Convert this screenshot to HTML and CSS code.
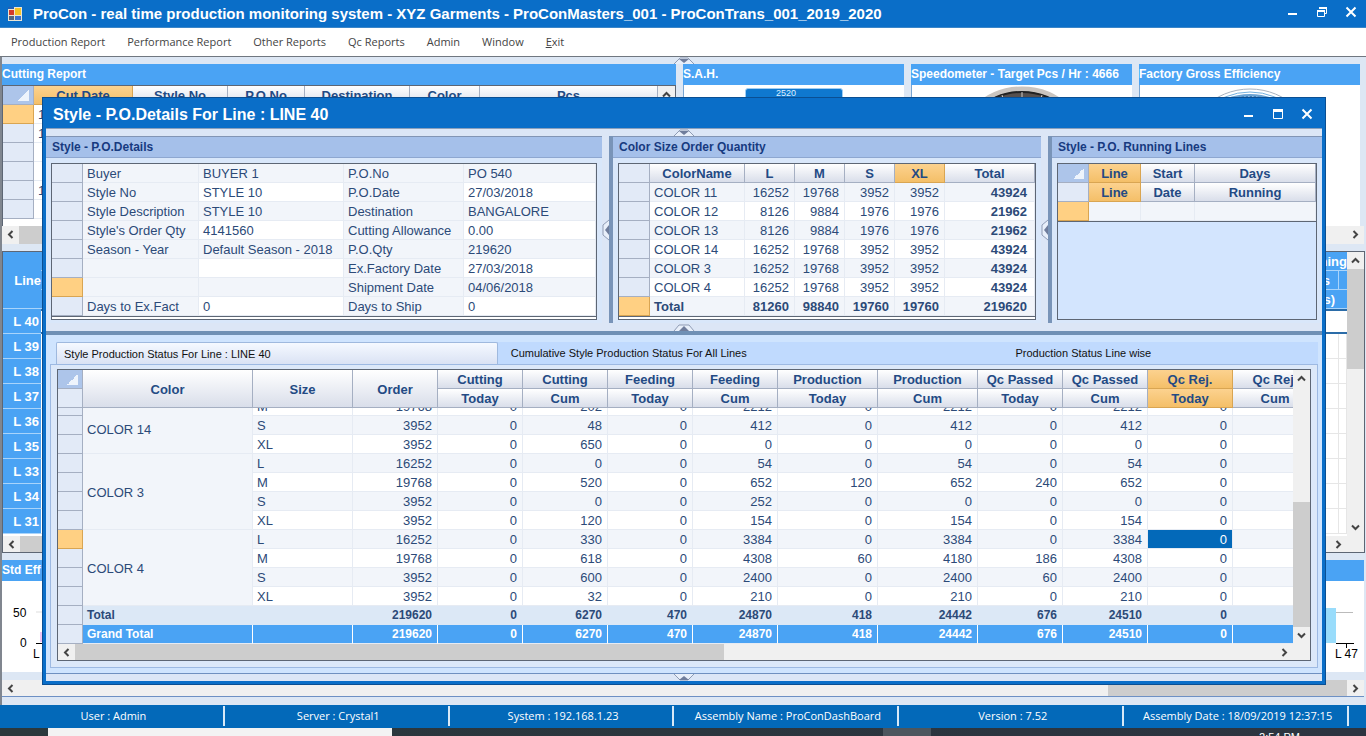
FILE: index.html
```html
<!DOCTYPE html>
<html lang="en">
<head>
  <meta charset="UTF-8">
  <meta name="viewport" content="width=device-width, initial-scale=1.0">
  <title>ProCon - real time production monitoring system</title>
  <link rel="stylesheet" href="styles.css">
</head>
<body>

  <!-- Shared icons -->
  <svg class="icon-defs" aria-hidden="true">
    <symbol id="arrow-up" viewBox="0 0 9 9"><path d="M1 6.5L4.500 3L8 6.500" fill="none" stroke="#444" stroke-width="2"/></symbol>
    <symbol id="arrow-down" viewBox="0 0 9 9"><path d="M1 2.500L4.500 6L8 2.500" fill="none" stroke="#444" stroke-width="2"/></symbol>
    <symbol id="arrow-left" viewBox="0 0 9 9"><path d="M6.500 1L3 4.500L6.500 8" fill="none" stroke="#444" stroke-width="2"/></symbol>
    <symbol id="arrow-right" viewBox="0 0 9 9"><path d="M2.500 1L6 4.500L2.500 8" fill="none" stroke="#444" stroke-width="2"/></symbol>
    <symbol id="win-min" viewBox="0 0 14 14"><path d="M2 9h9" stroke="#fff" stroke-width="2"/></symbol>
    <symbol id="win-max" viewBox="0 0 14 14"><path d="M2.500 2.500h9v9h-9z" fill="none" stroke="#fff"/><path d="M2 3.500h10" stroke="#fff" stroke-width="3"/></symbol>
    <symbol id="win-restore" viewBox="0 0 14 14"><path d="M4.500 4V2.500h7v6H9.500M2.500 5.500h7v6h-7z" fill="none" stroke="#fff"/><path d="M4 3h8M2 6h8" stroke="#fff" stroke-width="2"/></symbol>
    <symbol id="win-close" viewBox="0 0 14 14"><path d="M2.500 2.500l9 9M11.500 2.500l-9 9" stroke="#fff" stroke-width="2"/></symbol>
    <symbol id="grip-down" viewBox="0 0 22 7"><path d="M1 7L7 1H15L21 7" fill="#e8effa" stroke="#8e9bb4"/><path d="M6 2h10l-5 4z" fill="#6f7d9c"/></symbol>
    <symbol id="grip-up" viewBox="0 0 22 7"><path d="M1 7L6 1H16L21 7" fill="#e8effa" stroke="#8e9bb4"/><path d="M6 7h10l-5-5z" fill="#6f7d9c"/></symbol>
    <symbol id="grip-foot" viewBox="0 0 22 7"><path d="M1 0L7 6H15L21 0" fill="#e8effa" stroke="#8e9bb4"/><path d="M6 6h10l-5-4z" fill="#6f7d9c"/></symbol>
    <symbol id="grip-left" viewBox="0 0 7 22"><path d="M7 1L1 6V16L7 21" fill="#e8effa" stroke="#8e9bb4"/><path d="M7 6v10l-4-5z" fill="#6f7d9c"/></symbol>
  </svg>

  <header class="titlebar">
    <svg class="app-icon" viewBox="0 0 14 14">
      <rect width="14" height="14" fill="#e9e4d4"/>
      <rect x="1" y="3" width="5" height="5" fill="#d33b2c"/>
      <rect x="7" y="1" width="6" height="7" fill="#f5c326"/>
      <rect x="1" y="9" width="5" height="4" fill="#56657e"/>
      <rect x="7" y="9" width="6" height="4" fill="#3c74cf"/>
      <path d="M0 1h6" stroke="#2360b5" stroke-width="2"/>
    </svg>
    <h1 class="titlebar-text">ProCon - real time production monitoring system - XYZ Garments - ProConMasters_001 - ProConTrans_001_2019_2020</h1>
    <div class="win-buttons">
      <button aria-label="Minimize"><svg><use href="#win-min"/></svg></button>
      <button aria-label="Restore"><svg><use href="#win-restore"/></svg></button>
      <button aria-label="Close"><svg><use href="#win-close"/></svg></button>
    </div>
  </header>

  <nav class="menu">
    <a href="#">Production Report</a>
    <a href="#">Performance Report</a>
    <a href="#">Other Reports</a>
    <a href="#">Qc Reports</a>
    <a href="#">Admin</a>
    <a href="#">Window</a>
    <a href="#"><u>E</u>xit</a>
  </nav>

  <main class="dashboard">
    <div class="strip"><svg class="grip"><use href="#grip-down"/></svg></div>

    <!-- Top row of panels -->
    <div class="panels">
      <section class="panel">
        <h2 class="panel-title">Cutting Report</h2>
        <div class="grid-wrap cutting">
          <table class="grid">
            <colgroup><col class="w31"><col class="w99"><col class="w95"><col class="w77"><col class="w105"><col class="w70"><col></colgroup>
            <thead>
              <tr><th class="corner"></th><th class="active">Cut.Date</th><th>Style No</th><th>P.O.No</th><th>Destination</th><th>Color</th><th>Pcs</th></tr>
            </thead>
            <tbody>
              <tr><th class="active"></th><td>1</td><td></td><td></td><td></td><td></td><td></td></tr>
              <tr><th></th><td>1</td><td></td><td></td><td></td><td></td><td></td></tr>
              <tr><th></th><td></td><td></td><td></td><td></td><td></td><td></td></tr>
              <tr><th></th><td></td><td></td><td></td><td></td><td></td><td></td></tr>
              <tr><th></th><td>1</td><td></td><td></td><td></td><td></td><td></td></tr>
              <tr><th></th><td></td><td></td><td></td><td></td><td></td><td></td></tr>
            </tbody>
          </table>
          <div class="vscroll">
            <button aria-label="Scroll up"><svg><use href="#arrow-up"/></svg></button>
          </div>
        </div>
      </section>
      <section class="panel">
        <h2 class="panel-title">S.A.H.</h2>
        <div class="panel-body"><span class="sah-value">2520</span></div>
      </section>
      <section class="panel">
        <h2 class="panel-title">Speedometer - Target Pcs / Hr : 4666</h2>
        <div class="panel-body">
          <svg class="gauge" viewBox="0 0 140 140">
            <circle cx="70" cy="70" r="67" fill="#4b4644" stroke="#c9c4bf" stroke-width="5"/>
            <circle cx="70" cy="70" r="64" fill="#57504d" stroke="#222" stroke-width="2"/>
            <path d="M70 6v12M50 9l3 9M90 9l-3 9" stroke="#cfcac6"/>
          </svg>
        </div>
      </section>
      <section class="panel">
        <h2 class="panel-title">Factory Gross Efficiency</h2>
        <div class="panel-body">
          <svg class="gauge" viewBox="0 0 140 140">
            <circle cx="70" cy="70" r="67" fill="#fff" stroke="#a9b3bf"/>
            <circle cx="70" cy="70" r="64" fill="#fff" stroke="#74b1df"/>
            <circle cx="70" cy="70" r="61" fill="#3b7db9" stroke="#6ba3d3" stroke-width="2"/>
            <circle cx="70" cy="70" r="59" fill="none" stroke="#cfe2f3" stroke-width="2" stroke-dasharray="1 3"/>
          </svg>
        </div>
      </section>
    </div>
    <div class="hscroll top-scroll">
      <button aria-label="Scroll left"><svg><use href="#arrow-left"/></svg></button>
      <div class="track"><div class="thumb thumb-half"></div></div>
      <button aria-label="Scroll right"><svg><use href="#arrow-right"/></svg></button>
    </div>

    <!-- Line wise grid -->
    <section class="lines">
      <div class="lines-main">
        <div class="lines-clip">
          <table class="line-grid">
            <colgroup><col class="w38"><col><col class="w70"><col class="w8"></colgroup>
            <thead>
              <tr><th rowspan="3">Line</th><th></th><th colspan="2">Running</th></tr>
              <tr><th></th><th class="mid">Mins</th><th></th></tr>
              <tr><th></th><th class="mid" colspan="2">(Mins)</th></tr>
            </thead>
            <tbody>
              <tr class="current"><th>L 40</th><td></td><td></td><td></td></tr>
              <tr><th>L 39</th><td></td><td></td><td></td></tr>
              <tr><th>L 38</th><td></td><td></td><td></td></tr>
              <tr><th>L 37</th><td></td><td></td><td></td></tr>
              <tr><th>L 36</th><td></td><td></td><td></td></tr>
              <tr><th>L 35</th><td></td><td></td><td></td></tr>
              <tr><th>L 33</th><td></td><td></td><td></td></tr>
              <tr><th>L 34</th><td></td><td></td><td></td></tr>
              <tr><th>L 31</th><td></td><td></td><td></td></tr>
            </tbody>
          </table>
        </div>
        <div class="vscroll">
          <button aria-label="Scroll up"><svg><use href="#arrow-up"/></svg></button>
          <div class="track"><div class="thumb thumb-lines"></div></div>
          <button aria-label="Scroll down"><svg><use href="#arrow-down"/></svg></button>
        </div>
      </div>
      <div class="hscroll with-corner">
        <button aria-label="Scroll left"><svg><use href="#arrow-left"/></svg></button>
        <div class="track"><div class="thumb thumb-half"></div></div>
        <button aria-label="Scroll right"><svg><use href="#arrow-right"/></svg></button>
      </div>
    </section>

    <!-- Efficiency chart -->
    <section class="chart">
      <h2 class="panel-title">Std Eff</h2>
      <div class="chart-body">
        <svg class="chart-end" viewBox="0 0 42 90">
          <path d="M34 31h8" stroke="#ddd"/>
          <rect x="38" y="51" width="4" height="10" fill="#f0c4f3"/>
          <path d="M34 62.500h8" stroke="#000"/>
          <text x="11" y="36">50</text>
          <text x="18" y="66">0</text>
          <text x="31" y="77">L</text>
        </svg>
        <svg class="chart-end" viewBox="0 0 42 90">
          <path d="M0 31.500h31" stroke="#bbb"/>
          <rect x="0" y="27" width="14" height="35" fill="#99dcfb"/>
          <path d="M14 62.500h18M24.500 62v5" stroke="#000"/>
          <text x="13" y="77">L 47</text>
        </svg>
      </div>
    </section>

    <div class="hscroll page-scroll">
      <button aria-label="Scroll left"><svg><use href="#arrow-left"/></svg></button>
      <div class="track track-end"><div class="thumb thumb-page"></div></div>
      <button aria-label="Scroll right"><svg><use href="#arrow-right"/></svg></button>
    </div>

    <!-- Details window -->
    <div class="dialog" role="dialog" aria-labelledby="dialog-title">
      <div class="dialog-title">
        <h2 id="dialog-title">Style - P.O.Details For Line : LINE 40</h2>
        <div class="win-buttons">
          <button aria-label="Minimize"><svg><use href="#win-min"/></svg></button>
          <button aria-label="Maximize"><svg><use href="#win-max"/></svg></button>
          <button aria-label="Close"><svg><use href="#win-close"/></svg></button>
        </div>
      </div>
      <div class="dialog-body">
        <div class="strip dialog-strip"><svg class="grip"><use href="#grip-down"/></svg></div>

        <div class="panes">
          <section class="pane">
            <h3 class="pane-title">Style - P.O.Details</h3>
            <div class="grid-box">
              <table class="grid details">
                <colgroup><col class="w31"><col class="w116"><col class="w145"><col class="w120"><col></colgroup>
                <tbody>
                  <tr><th></th><td>Buyer</td><td>BUYER 1</td><td>P.O.No</td><td>PO 540</td></tr>
                  <tr><th></th><td>Style No</td><td>STYLE 10</td><td>P.O.Date</td><td>27/03/2018</td></tr>
                  <tr><th></th><td>Style Description</td><td>STYLE 10</td><td>Destination</td><td>BANGALORE</td></tr>
                  <tr><th></th><td>Style's Order Qty</td><td>4141560</td><td>Cutting Allowance</td><td>0.00</td></tr>
                  <tr><th></th><td>Season - Year</td><td>Default Season - 2018</td><td>P.O.Qty</td><td>219620</td></tr>
                  <tr><th></th><td></td><td></td><td>Ex.Factory Date</td><td>27/03/2018</td></tr>
                  <tr><th class="active"></th><td></td><td></td><td>Shipment Date</td><td>04/06/2018</td></tr>
                  <tr><th></th><td>Days to Ex.Fact</td><td>0</td><td>Days to Ship</td><td>0</td></tr>
                </tbody>
              </table>
            </div>
          </section>
          <div class="splitter"><svg class="grip-v"><use href="#grip-left"/></svg></div>
          <section class="pane">
            <h3 class="pane-title">Color Size Order Quantity</h3>
            <div class="grid-box">
              <table class="grid sizes">
                <colgroup><col class="w31"><col class="w95"><col class="w50"><col class="w50"><col class="w50"><col class="w50"><col></colgroup>
                <thead>
                  <tr><th class="row-head"></th><th>ColorName</th><th>L</th><th>M</th><th>S</th><th class="active">XL</th><th>Total</th></tr>
                </thead>
                <tbody>
                  <tr><th></th><td>COLOR 11</td><td>16252</td><td>19768</td><td>3952</td><td>3952</td><td>43924</td></tr>
                  <tr><th></th><td>COLOR 12</td><td>8126</td><td>9884</td><td>1976</td><td>1976</td><td>21962</td></tr>
                  <tr><th></th><td>COLOR 13</td><td>8126</td><td>9884</td><td>1976</td><td>1976</td><td>21962</td></tr>
                  <tr><th></th><td>COLOR 14</td><td>16252</td><td>19768</td><td>3952</td><td>3952</td><td>43924</td></tr>
                  <tr><th></th><td>COLOR 3</td><td>16252</td><td>19768</td><td>3952</td><td>3952</td><td>43924</td></tr>
                  <tr><th></th><td>COLOR 4</td><td>16252</td><td>19768</td><td>3952</td><td>3952</td><td>43924</td></tr>
                  <tr class="sum"><th class="active"></th><td>Total</td><td>81260</td><td>98840</td><td>19760</td><td>19760</td><td>219620</td></tr>
                </tbody>
              </table>
            </div>
          </section>
          <div class="splitter"><svg class="grip-v"><use href="#grip-left"/></svg></div>
          <section class="pane">
            <h3 class="pane-title">Style - P.O. Running Lines</h3>
            <div class="grid-box grid-box-empty">
              <table class="grid">
                <colgroup><col class="w31"><col class="w52"><col class="w54"><col></colgroup>
                <thead>
                  <tr><th class="corner"></th><th class="active">Line</th><th>Start</th><th>Days</th></tr>
                  <tr><th class="row-head"></th><th class="active">Line</th><th>Date</th><th>Running</th></tr>
                </thead>
                <tbody>
                  <tr><th class="active"></th><td></td><td></td><td></td></tr>
                </tbody>
              </table>
            </div>
          </section>
        </div>

        <div class="strip split-strip"><svg class="grip"><use href="#grip-up"/></svg></div>

        <section class="status">
          <div class="tabs" role="tablist">
            <button class="tab selected" role="tab" aria-selected="true">Style Production Status For Line : LINE 40</button>
            <button class="tab" role="tab" aria-selected="false">Cumulative Style Production Status For All Lines</button>
            <button class="tab" role="tab" aria-selected="false">Production Status Line wise</button>
          </div>
          <div class="tab-panel" role="tabpanel">
            <div class="status-grid">
              <div class="status-main">
                <div class="status-clip">
                  <table class="grid status-head">
                    <colgroup><col class="w25"><col class="w170"><col class="w100"><col class="w85"><col class="w85"><col class="w85"><col class="w85"><col class="w85"><col class="w100"><col class="w100"><col class="w85"><col class="w85"><col class="w85"><col class="w85"></colgroup>
                    <thead>
                      <tr><th class="corner"></th><th rowspan="2">Color</th><th rowspan="2">Size</th><th rowspan="2">Order</th><th>Cutting</th><th>Cutting</th><th>Feeding</th><th>Feeding</th><th>Production</th><th>Production</th><th>Qc Passed</th><th>Qc Passed</th><th class="active">Qc Rej.</th><th>Qc Rej.</th></tr>
                      <tr><th class="row-head"></th><th>Today</th><th>Cum</th><th>Today</th><th>Cum</th><th>Today</th><th>Cum</th><th>Today</th><th>Cum</th><th class="active">Today</th><th>Cum</th></tr>
                    </thead>
                  </table>
                  <!-- Kept scrolled to the last row -->
                  <div class="status-rows">
                    <table class="grid status-body">
                      <colgroup><col class="w25"><col class="w170"><col class="w100"><col class="w85"><col class="w85"><col class="w85"><col class="w85"><col class="w85"><col class="w100"><col class="w100"><col class="w85"><col class="w85"><col class="w85"><col class="w85"></colgroup>
                      <tbody>
                        <tr><th></th><td class="group cut" rowspan="3">COLOR 14</td><td class="size">M</td><td>19768</td><td>0</td><td>202</td><td>0</td><td>2212</td><td>0</td><td>2212</td><td>0</td><td>2212</td><td>0</td><td></td></tr>
                        <tr class="alt"><th></th><td class="size">S</td><td>3952</td><td>0</td><td>48</td><td>0</td><td>412</td><td>0</td><td>412</td><td>0</td><td>412</td><td>0</td><td></td></tr>
                        <tr><th></th><td class="size">XL</td><td>3952</td><td>0</td><td>650</td><td>0</td><td>0</td><td>0</td><td>0</td><td>0</td><td>0</td><td>0</td><td></td></tr>
                        <tr class="alt"><th></th><td class="group" rowspan="4">COLOR 3</td><td class="size">L</td><td>16252</td><td>0</td><td>0</td><td>0</td><td>54</td><td>0</td><td>54</td><td>0</td><td>54</td><td>0</td><td></td></tr>
                        <tr><th></th><td class="size">M</td><td>19768</td><td>0</td><td>520</td><td>0</td><td>652</td><td>120</td><td>652</td><td>240</td><td>652</td><td>0</td><td></td></tr>
                        <tr class="alt"><th></th><td class="size">S</td><td>3952</td><td>0</td><td>0</td><td>0</td><td>252</td><td>0</td><td>0</td><td>0</td><td>0</td><td>0</td><td></td></tr>
                        <tr><th></th><td class="size">XL</td><td>3952</td><td>0</td><td>120</td><td>0</td><td>154</td><td>0</td><td>154</td><td>0</td><td>154</td><td>0</td><td></td></tr>
                        <tr class="alt"><th class="active"></th><td class="group" rowspan="4">COLOR 4</td><td class="size">L</td><td>16252</td><td>0</td><td>330</td><td>0</td><td>3384</td><td>0</td><td>3384</td><td>0</td><td>3384</td><td class="picked">0</td><td></td></tr>
                        <tr><th></th><td class="size">M</td><td>19768</td><td>0</td><td>618</td><td>0</td><td>4308</td><td>60</td><td>4180</td><td>186</td><td>4308</td><td>0</td><td></td></tr>
                        <tr class="alt"><th></th><td class="size">S</td><td>3952</td><td>0</td><td>600</td><td>0</td><td>2400</td><td>0</td><td>2400</td><td>60</td><td>2400</td><td>0</td><td></td></tr>
                        <tr><th></th><td class="size">XL</td><td>3952</td><td>0</td><td>32</td><td>0</td><td>210</td><td>0</td><td>210</td><td>0</td><td>210</td><td>0</td><td></td></tr>
                      </tbody>
                      <tfoot>
                        <tr class="total"><th></th><td class="size">Total</td><td></td><td>219620</td><td>0</td><td>6270</td><td>470</td><td>24870</td><td>418</td><td>24442</td><td>676</td><td>24510</td><td>0</td><td></td></tr>
                        <tr class="grand"><th></th><td class="size">Grand Total</td><td></td><td>219620</td><td>0</td><td>6270</td><td>470</td><td>24870</td><td>418</td><td>24442</td><td>676</td><td>24510</td><td>0</td><td></td></tr>
                      </tfoot>
                    </table>
                  </div>
                </div>
                <div class="vscroll">
                  <button aria-label="Scroll up"><svg><use href="#arrow-up"/></svg></button>
                  <div class="track track-end"><div class="thumb thumb-status"></div></div>
                  <button aria-label="Scroll down"><svg><use href="#arrow-down"/></svg></button>
                </div>
              </div>
              <div class="hscroll with-corner">
                <button aria-label="Scroll left"><svg><use href="#arrow-left"/></svg></button>
                <div class="track"><div class="thumb thumb-wide"></div></div>
                <button aria-label="Scroll right"><svg><use href="#arrow-right"/></svg></button>
              </div>
            </div>
          </div>
        </section>

        <div class="strip foot-strip"><svg class="grip"><use href="#grip-foot"/></svg></div>
      </div>
    </div>
  </main>

  <footer class="statusbar">
    <span>User : Admin</span>
    <span>Server : Crystal1</span>
    <span>System : 192.168.1.23</span>
    <span>Assembly Name : ProConDashBoard</span>
    <span>Version : 7.52</span>
    <span>Assembly Date : 18/09/2019 12:37:15</span>
  </footer>
  <div class="taskbar">
    <div class="task-search"></div>
    <div class="task-app"></div>
    <div class="task-tray">2:54 PM</div>
  </div>
</body>
</html>
```
FILE: styles.css
```css
:root {
  --title-blue: #0a6ec8;
  --bar-blue: #4aa3f4;
  --deep-blue: #0369b9;
  --text: #2c4a78;
  --head-text: #234a84;
  --grid-line: #e6ebf3;
  --head-line: #a5afc2;
  --row-head: #e2eaf7;
  --alt: #f2f5fa;
  --orange: #ffd083;
}

* {
  margin: 0;
  padding: 0;
  box-sizing: border-box;
}

body {
  height: 100vh;
  display: flex;
  flex-direction: column;
  overflow: hidden;
  background: #fff;
  color: var(--text);
  font-family: "Liberation Sans", Arial, sans-serif;
  font-size: 13px;
}

button {
  border: 0;
  background: none;
  font: inherit;
}

.icon-defs {
  display: none;
}

/* Main window title */
.titlebar {
  flex: none;
  height: 28px;
  display: flex;
  align-items: center;
  gap: 11px;
  padding: 0 8px;
  background: var(--title-blue);
  border-bottom: 1px solid #3b86c9;
  color: #fff;
}

.app-icon {
  width: 14px;
  height: 14px;
}

.titlebar-text {
  flex: 1;
  font-size: 15px;
  white-space: nowrap;
}

.win-buttons {
  display: flex;
  gap: 15px;
}

.win-buttons button,
.win-buttons svg {
  display: block;
  width: 14px;
  height: 14px;
}

.titlebar .win-buttons {
  padding-bottom: 4px;
}

/* Menu */
.menu {
  flex: none;
  height: 29px;
  display: flex;
  align-items: center;
  gap: 22px;
  padding: 0 11px 2px;
  border-bottom: 1px solid #707780;
  background: #fff;
  font-family: "Open Sans", "Noto Sans", sans-serif;
  font-size: 11px;
}

.menu a {
  color: #444;
  text-decoration: none;
}

/* Dashboard behind the details window */
.dashboard {
  flex: 1;
  min-height: 0;
  position: relative;
  display: flex;
  flex-direction: column;
  padding-bottom: 9px;
  border-left: 2px solid #80868f;
  background: #dde7f4;
}

.strip {
  flex: none;
  height: 7px;
  display: flex;
  justify-content: center;
}

.grip {
  width: 22px;
  height: 7px;
}

.grip-v {
  width: 7px;
  height: 22px;
}

.panels {
  flex: none;
  height: 162px;
  display: grid;
  grid-template-columns: 674fr 221fr 221fr 221fr;
  gap: 7px;
  padding-right: 6px;
}

.panel {
  min-width: 0;
  display: flex;
  flex-direction: column;
  background: #fff;
  overflow: hidden;
}

.panel-title {
  flex: none;
  height: 21px;
  background: var(--bar-blue);
  color: #fff;
  font-size: 12px;
  line-height: 20px;
  white-space: nowrap;
}

.panel-body {
  flex: 1;
  border-left: 1px solid #78a5d2;
  text-align: center;
}

.sah-value {
  display: block;
  width: 98px;
  height: 60px;
  margin: 3px auto 0 61px;
  padding-right: 46px;
  border: 1px solid #9fcdf3;
  border-radius: 3px;
  background: #0f78cf;
  color: #dff0ff;
  font-size: 9px;
  line-height: 9px;
  text-align: right;
}

.gauge {
  width: 140px;
  height: 140px;
  margin-top: 1px;
}

.grid-wrap {
  flex: 1;
  min-height: 0;
  display: flex;
  border: 1px solid #5d6674;
  border-bottom: 0;
}

.grid-wrap .grid {
  align-self: flex-start;
}

/* Grids */
.grid {
  width: 100%;
  table-layout: fixed;
  border-spacing: 0;
  border-collapse: separate;
}

.grid th,
.grid td {
  height: 19px;
  padding: 1px 4px 0;
  border-right: 1px solid var(--grid-line);
  border-bottom: 1px solid var(--grid-line);
  line-height: 17px;
  white-space: nowrap;
  overflow: hidden;
}

.grid th {
  border-color: var(--head-line);
  background: var(--row-head);
}

.grid td {
  background: #fff;
}

.grid thead th {
  background: linear-gradient(#fff, #d9deea);
  color: var(--head-text);
}

.grid thead .row-head {
  background: var(--row-head);
}

.grid thead .corner {
  background: linear-gradient(135deg, transparent 50%, #eef4fc 50%) no-repeat right 4px bottom 3px / 11px 11px, #adc5ea;
}

.grid thead .active {
  background: linear-gradient(#fcd28f, #f4bf68);
  border-color: #d9a552;
}

.grid tbody .active {
  background: var(--orange);
  border-color: #d9a552;
}

.w8 { width: 8px; }
.w25 { width: 25px; }
.w31 { width: 31px; }
.w38 { width: 38px; }
.w50 { width: 50px; }
.w52 { width: 52px; }
.w54 { width: 54px; }
.w70 { width: 70px; }
.w77 { width: 77px; }
.w85 { width: 85px; }
.w95 { width: 95px; }
.w99 { width: 99px; }
.w100 { width: 100px; }
.w105 { width: 105px; }
.w116 { width: 116px; }
.w120 { width: 120px; }
.w145 { width: 145px; }
.w170 { width: 170px; }

/* Scrollbars */
.vscroll,
.hscroll {
  flex: none;
  display: flex;
  background: #f0f0f0;
}

.vscroll {
  width: 17px;
  flex-direction: column;
}

.hscroll {
  height: 16px;
}

.vscroll button,
.hscroll button {
  flex: none;
  width: 17px;
  height: 17px;
  display: flex;
  align-items: center;
  justify-content: center;
}

.vscroll svg,
.hscroll svg {
  width: 9px;
  height: 9px;
}

.with-corner {
  padding-right: 17px;
}

.track {
  flex: 1;
  display: flex;
}

.vscroll .track {
  flex-direction: column;
}

.track-end {
  justify-content: flex-end;
}

.thumb {
  background: #cdcdcd;
}

.thumb-half { width: 50%; }
.thumb-wide { width: 54%; }
.thumb-page { width: 18%; }
.thumb-lines { height: 40%; }
.thumb-status { height: 52%; }

.top-scroll {
  height: 18px;
  margin-right: 2px;
}

/* Line wise grid */
.lines {
  flex: none;
  display: flex;
  flex-direction: column;
  height: 302px;
  margin: 7px 1px 7px 0;
  border: 1px solid #5d6674;
  background: #fff;
}

.lines-main {
  flex: 1;
  min-height: 0;
  display: flex;
}

.lines-clip {
  flex: 1;
  overflow: hidden;
}

.line-grid {
  width: 100%;
  table-layout: fixed;
  border-spacing: 0;
}

.line-grid th {
  height: 25px;
  padding-right: 2px;
  border-bottom: 1px solid #a9d4fb;
  background: var(--bar-blue);
  color: #fff;
  text-align: right;
}

.line-grid td {
  height: 25px;
  border-right: 1px solid #e6e6e6;
  border-bottom: 1px solid #e6e6e6;
}

.line-grid thead th {
  height: 19px;
  padding-right: 0;
}

.line-grid thead th.mid {
  padding-right: 8px;
  border-right: 1px solid #a9d4fb;
}

.line-grid thead th[colspan="2"].mid {
  padding-right: 12px;
  border-right: 0;
}

.line-grid .current td {
  border-right: 0;
  border-top: 2px solid #2b6ca8;
  border-bottom: 2px solid #2b6ca8;
}

/* Efficiency chart */
.chart {
  flex: 1;
  min-height: 0;
  display: flex;
  flex-direction: column;
  margin: 0 2px 8px 0;
  background: #fff;
}

.chart-body {
  flex: 1;
  display: flex;
  justify-content: space-between;
}

.chart-end {
  width: 42px;
  height: 90px;
  font-size: 12px;
}

.page-scroll {
  margin-right: 2px;
  box-shadow: 0 1px #6d90c4;
}

/* Details window, floats over the dashboard */
.dialog {
  position: absolute;
  top: 40px;
  right: 40px;
  bottom: 20px;
  left: 40px;
  display: flex;
  flex-direction: column;
  border: 1px solid #0a4f93;
  background: var(--title-blue);
}

.dialog-title {
  flex: none;
  height: 30px;
  display: flex;
  align-items: center;
  padding: 4px 11px 0 10px;
  color: #fff;
}

.dialog-title h2 {
  flex: 1;
  font-size: 16px;
  white-space: nowrap;
}

.dialog-title .win-buttons {
  padding-bottom: 2px;
}

.dialog-body {
  flex: 1;
  min-height: 0;
  display: flex;
  flex-direction: column;
  margin: 0 3px 3px;
  background: #dce6f6;
}

.dialog-strip {
  height: 8px;
  border-top: 1px solid #8aa0bd;
}

.panes {
  flex: none;
  display: grid;
  grid-template-columns: 556fr 11px 428fr 11px 270fr;
}

.pane {
  min-width: 0;
  display: flex;
  flex-direction: column;
  padding-bottom: 3px;
  background: #d9e7fa;
}

.pane-title {
  height: 22px;
  padding: 0 6px;
  border-top: 1px solid #8295b5;
  border-bottom: 1px solid #8ea7d0;
  background: #a5c0ea;
  color: #173a80;
  font-size: 12px;
  line-height: 21px;
}

.splitter {
  display: flex;
  align-items: center;
  border-right: 4px solid #7994b8;
}

.grid-box {
  flex: 1;
  margin: 5px 5px 0;
  padding-bottom: 2px;
  border: 1px solid #5d6674;
  background: #fff;
}

.grid-box .grid {
  border-bottom: 1px solid #5d6674;
}

.grid-box-empty {
  background: #d3e5fe;
}

.grid-box tr:nth-child(odd) td,
.details td:nth-child(even) {
  background: var(--alt);
}

.sizes td {
  padding-right: 5px;
  text-align: right;
}

.sizes td:nth-child(2) {
  text-align: left;
}

.sizes td:last-child {
  padding-right: 7px;
}

.sizes td:last-child,
.sum td {
  font-weight: bold;
}

.split-strip {
  height: 12px;
  align-items: flex-end;
  border-bottom: 4px solid #6f90b5;
}

/* Production status */
.status {
  flex: 1;
  min-height: 0;
  display: flex;
  flex-direction: column;
  padding: 7px 4px 5px;
  background: #cfe4fe;
}

.tabs {
  flex: none;
  height: 22px;
  display: grid;
  grid-template-columns: 35fr 40fr 25fr;
  margin-left: 6px;
  background: #c0dafe;
}

.tab {
  padding-left: 13px;
  color: #111;
  font-size: 11px;
  text-align: left;
}

.tab.selected {
  padding-left: 7px;
  border: 1px solid #9fb9de;
  border-bottom: 0;
  border-radius: 2px 2px 0 0;
  background: linear-gradient(#f5f9ff, #dae2f4);
}

.tab-panel {
  flex: 1;
  min-height: 0;
  display: flex;
  padding: 4px 6px 6px;
  border: 1px solid #9db9e2;
  background: #dce8f9;
}

.status-grid {
  flex: 1;
  min-width: 0;
  display: flex;
  flex-direction: column;
  border: 1px solid #5d6674;
  background: #fff;
}

.status-main {
  flex: 1;
  min-height: 0;
  display: flex;
}

.status-clip {
  flex: 1;
  min-width: 0;
  display: flex;
  flex-direction: column;
  overflow: hidden;
}

.status-head,
.status-body {
  flex: none;
  width: 1175px;
}

.status-rows {
  flex: 1;
  min-height: 0;
  display: flex;
  flex-direction: column;
  justify-content: flex-end;
  overflow: hidden;
}

.status-body td {
  padding-right: 5px;
  text-align: right;
}

.status-body .size,
.status-body .group {
  text-align: left;
}

.status-body .alt td,
.status-body .group {
  background: var(--alt);
}

.status-body .cut {
  padding-top: 9px;
}

.status-body .alt .picked {
  background: var(--deep-blue);
  color: #fff;
}

.status-body .total td {
  border-color: #dce8f6;
  background: #dce8f6;
  font-size: 12px;
  font-weight: bold;
}

.status-body .grand td {
  border-right-color: #fff;
  background: var(--bar-blue);
  color: #fff;
  font-size: 12px;
  font-weight: bold;
}

.foot-strip {
  height: 8px;
  border-top: 1px solid #6f90c0;
}

/* Bottom bars */
.statusbar {
  flex: none;
  height: 23px;
  display: flex;
  padding: 1px 17px 2px 0;
  background: var(--deep-blue);
  color: #fff;
  font-family: "Open Sans", "Noto Sans", sans-serif;
  font-size: 11px;
  line-height: 20px;
}

.statusbar span {
  flex: 1;
  padding-left: 4px;
  border-right: 2px solid #d8e9f7;
  text-align: center;
}

.taskbar {
  flex: none;
  height: 8px;
  display: flex;
  padding-left: 48px;
  overflow: hidden;
  background: linear-gradient(90deg, #2b383c, #2c3440);
}

.task-search {
  width: 344px;
  background: #f3f3f3;
}

.task-app {
  width: 48px;
  margin-left: 491px;
  background: #4d565e;
}

.task-tray {
  flex: 1;
  padding: 3px 66px 0 0;
  color: #fff;
  font-size: 11px;
  text-align: right;
}
```
